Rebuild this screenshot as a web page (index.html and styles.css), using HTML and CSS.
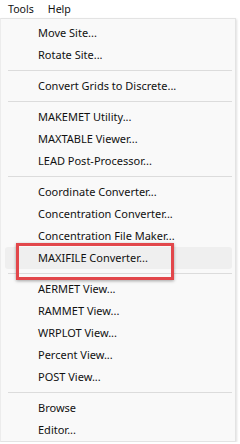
FILE: index.html
```html
<!DOCTYPE html>
<html lang="en">
<head>
    <meta charset="UTF-8">
    <meta name="viewport" content="width=device-width, initial-scale=1.0">
    <title>Tools menu</title>
    <link rel="stylesheet" href="styles.css">
</head>
<body>
    <div class="menubar">
        <span class="menubar-item">Tools</span>
        <span class="menubar-item">Help</span>
    </div>

    <div class="menu">
        <div class="item">Move Site...</div>
        <div class="item">Rotate Site...</div>
        <div class="sep"></div>
        <div class="item">Convert Grids to Discrete...</div>
        <div class="sep"></div>
        <div class="item">MAKEMET Utility...</div>
        <div class="item">MAXTABLE Viewer...</div>
        <div class="item">LEAD Post-Processor...</div>
        <div class="sep"></div>
        <div class="item">Coordinate Converter...</div>
        <div class="item">Concentration Converter...</div>
        <div class="item">Concentration File Maker...</div>
        <div class="item hover marked">MAXIFILE Converter...</div>
        <div class="sep"></div>
        <div class="item">AERMET View...</div>
        <div class="item">RAMMET View...</div>
        <div class="item">WRPLOT View...</div>
        <div class="item">Percent View...</div>
        <div class="item">POST View...</div>
        <div class="sep"></div>
        <div class="item">Browse</div>
        <div class="item">Editor...</div>
    </div>
</body>
</html>
```

FILE: styles.css
```css
body {
    margin: 0;
    background-color: #fff;
    font-family: "Noto Sans", "Open Sans", sans-serif;
    font-size: 11px;
    color: #111;
}

.menubar {
    display: flex;
    height: 18px;
    align-items: center;
    padding-left: 8px;
    gap: 14px;
    background-color: #fff;
    font-size: 10.6px;
}

.menubar-item {
    line-height: 18px;
}

.menu {
    width: 236px;
    height: 424px;
    box-sizing: border-box;
    padding-top: 3px;
    background-color: #f9f9f9;
    border: 1px solid #e3e3e3;
    border-left-color: #ececec;
    box-shadow: 1px 1px 2px rgba(0, 0, 0, 0.12);
}

.item {
    position: relative;
    height: 22px;
    line-height: 22px;
    margin: 0 3px 0 4px;
    padding-left: 33px;
    border-radius: 3px;
}

.item.hover {
    background-color: #efefef;
}

.item.marked::after {
    content: "";
    position: absolute;
    left: 11px;
    top: -4px;
    width: 152px;
    height: 31px;
    border: 3px solid #e2474b;
    box-shadow: 0 1px 3px rgba(0, 0, 0, 0.35);
}

.sep {
    height: 1px;
    margin: 4px 3px 4px 7px;
    background-color: #dcdcdc;
}
```
